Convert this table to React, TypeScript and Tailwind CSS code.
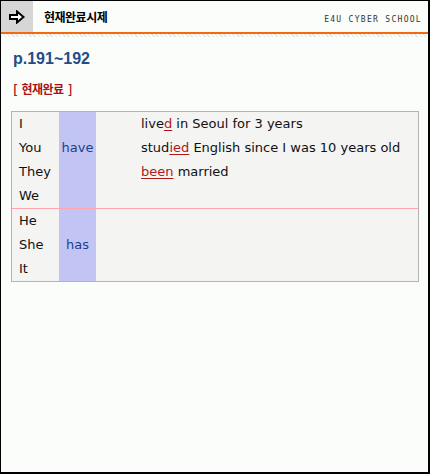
const red = 'text-[#b01818] underline underline-offset-2 decoration-[#b01818]';

const rows = [
  { who: 'I', aux: '', rest: <span>live<span className={red}>d</span> in Seoul for 3 years</span> },
  { who: 'You', aux: 'have', rest: <span>stud<span className={red}>ied</span> English since I was 10 years old</span> },
  { who: 'They', aux: '', rest: <span><span className={red}>been</span> married</span> },
  { who: 'We', aux: '', rest: null },
  { who: 'He', aux: '', rest: null },
  { who: 'She', aux: 'has', rest: null },
  { who: 'It', aux: '', rest: null },
];

const Row = ({ who, aux, rest }: { who: string; aux: string; rest: React.ReactNode }) => (
  <div className="grid grid-cols-[47px_37px_1fr] h-[24px] items-stretch">
    <div className="pl-[7px] flex items-center">{who}</div>
    <div className="bg-[#c2c5f4] flex items-center justify-center text-[#1c3f8c]">{aux}</div>
    <div className="pl-[45px] flex items-center whitespace-nowrap">{rest}</div>
  </div>
);

const App = () => {
  return (
    <div className="w-[430px] h-[474px] bg-[#fbfdfb] border-t border-l border-r-2 border-b-2 border-black overflow-hidden font-['Liberation_Sans','Noto_Sans_CJK_KR',sans-serif]">
      {/* Header */}
      <div className="flex items-center h-[31px]">
        <div className="w-[32px] h-full bg-[#d6d6d6] flex items-center justify-center">
          <svg width="16" height="14" viewBox="0 0 16 14">
            <path d="M1 5 H8 V1.5 L14.5 7 L8 12.5 V9 H1 Z" fill="white" stroke="black" strokeWidth="2" strokeLinejoin="miter" />
          </svg>
        </div>
        <div className="ml-[11px] text-[12px] font-bold text-black font-['Noto_Sans_CJK_KR',sans-serif] tracking-[-0.5px]">현재완료시제</div>
        <div className="ml-auto mr-[6px] mt-[7px] text-[8px] tracking-[1.3px] text-[#333] font-['DejaVu_Sans_Mono',monospace]">E4U CYBER SCHOOL</div>
      </div>
      <div className="h-[2px] bg-[#f26a0c]" />
      <div className="h-[3px] bg-[repeating-linear-gradient(45deg,#e4e4e4_0_1px,#fbfdfb_1px_3px)]" />

      {/* Content */}
      <div className="pl-[12px] pt-[12px]">
        <div className="text-[16px] font-bold text-[#244d87] leading-[20px]">p.191~192</div>
        <div className="mt-[13px] text-[12px] font-bold text-[#a81414] leading-[14px] font-['Noto_Sans_CJK_KR',sans-serif] tracking-[-0.5px] whitespace-pre">[  현재완료  ]</div>
      </div>

      <div className="mt-[15px] ml-[10px] w-[408px] border border-[#b4b4b4] bg-[#f4f4f2] text-[13px] text-[#111] font-['DejaVu_Sans',sans-serif]">
        {rows.slice(0, 4).map((r, i) => (
          <Row key={i} {...r} />
        ))}
        <div className="h-px bg-[#ffa4b0]" />
        {rows.slice(4).map((r, i) => (
          <Row key={i} {...r} />
        ))}
      </div>
    </div>
  );
};

export default App;
